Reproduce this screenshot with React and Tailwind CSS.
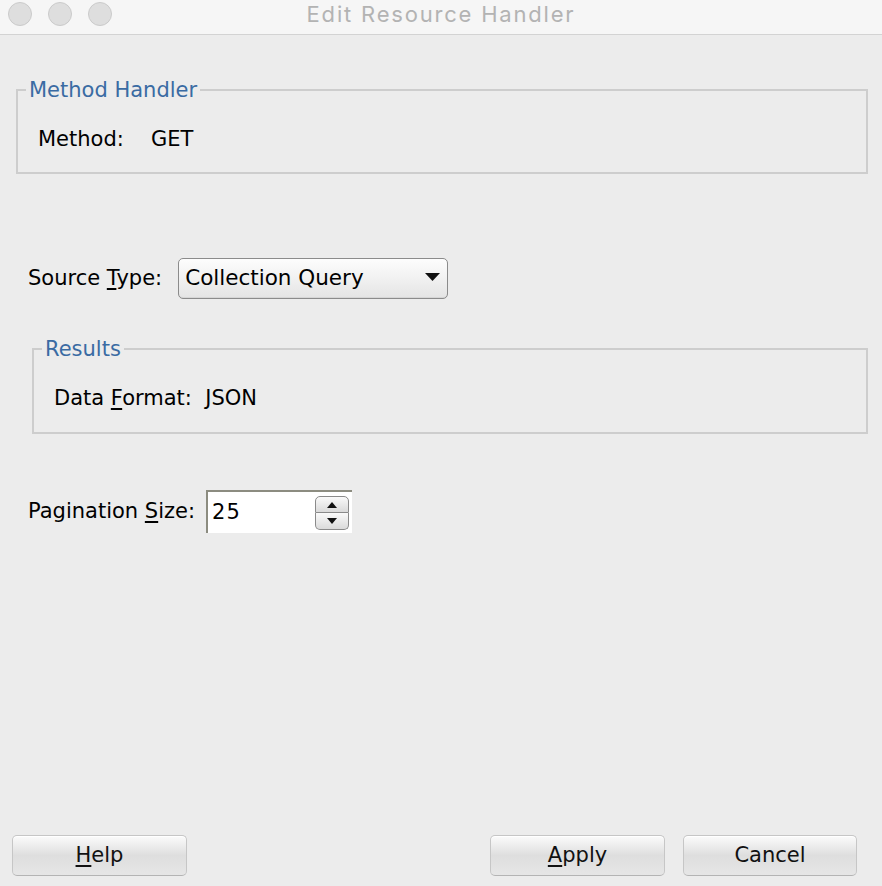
import React from "react";

const font = { fontFamily: '"DejaVu Sans", sans-serif' };

function U({ children }) {
  return <span className="underline decoration-[1.5px] underline-offset-[3px]">{children}</span>;
}

function TitleBar() {
  return (
    <div className="h-[35px] shrink-0 flex items-start bg-[#f6f6f6] border-b border-[#d3d3d3] relative">
      <div className="flex gap-4 pl-2 pt-[2px]">
        <span className="w-6 h-6 rounded-full bg-[#dedede] border border-[#cbcbcb]" />
        <span className="w-6 h-6 rounded-full bg-[#dedede] border border-[#cbcbcb]" />
        <span className="w-6 h-6 rounded-full bg-[#dedede] border border-[#cbcbcb]" />
      </div>
      <div
        className="absolute inset-x-0 top-0 h-[29px] flex items-center justify-center text-[22px] tracking-[1.8px] text-[#b3b3b3] pointer-events-none"
        style={{ fontFamily: 'Inter, "Liberation Sans", sans-serif' }}
      >
        Edit Resource Handler
      </div>
    </div>
  );
}

function Group({ title, className, children }) {
  return (
    <fieldset className={"border-2 border-[#cdcdcd] " + className}>
      <legend className="ml-[8px] px-[3px] text-[21px] leading-[24px] text-[#3a6ba3]">{title}</legend>
      {children}
    </fieldset>
  );
}

function Combo({ value }) {
  return (
    <div className="w-[270px] h-[41px] rounded-[5px] border border-[#8b8b8b] bg-gradient-to-b from-[#fdfdfd] via-[#f1f1f1] to-[#e4e4e4] flex items-center pl-[6px] pr-[7px] shadow-[inset_0_-1px_0_#d6d6d6]">
      <span className="flex-1 text-[21.5px] text-black">{value}</span>
      <svg width="15" height="8" viewBox="0 0 15 8" className="-mt-[4px]">
        <path d="M0 0h15L7.5 8z" fill="#111" />
      </svg>
    </div>
  );
}

function SpinHalf({ up }) {
  return (
    <div
      className={
        "h-[17px] w-[34px] border border-[#8a8a8a] bg-gradient-to-b from-[#fafafa] to-[#dadada] flex items-center justify-center " +
        (up ? "rounded-t-[5px]" : "rounded-b-[5px] border-t-0")
      }
    >
      <svg width="10" height="6" viewBox="0 0 10 6">
        {up ? <path d="M0 6h10L5 0z" fill="#111" /> : <path d="M0 0h10L5 6z" fill="#111" />}
      </svg>
    </div>
  );
}

function Spinner({ value }) {
  return (
    <div className="w-[146px] h-[43px] bg-white border-t-2 border-l-2 border-[#8c8c80] flex items-center pl-[4px] pr-[3px]">
      <span className="flex-1 text-[21px] tracking-[1px] text-black">{value}</span>
      <div className="flex flex-col mt-[1px]">
        <SpinHalf up />
        <SpinHalf />
      </div>
    </div>
  );
}

function Button({ children, className }) {
  return (
    <button
      type="button"
      className={
        "h-[41px] rounded-[5px] border border-[#c6c6c6] border-b-[#b4b4b4] bg-gradient-to-b from-[#fbfbfb] via-[#dedede] to-[#e6e6e6] shadow-[inset_0_1px_0_#ffffff] text-[21px] text-[#111] flex items-center justify-center " +
        className
      }
    >
      {children}
    </button>
  );
}

export default function App() {
  return (
    <div className="w-[882px] h-[886px] bg-[#ececec] flex flex-col text-black" style={font}>
      <TitleBar />
      <div className="flex-1 flex flex-col">
        <Group title="Method Handler" className="mt-[43px] ml-4 mr-[14px]">
          <div className="flex text-[21px] leading-[26px] pl-[20px] pt-[24px] pb-[20px]">
            <span className="w-[113px]">Method:</span>
            <span>GET</span>
          </div>
        </Group>

        <div className="mt-[84px] ml-[28px] flex items-center gap-[16px]">
          <span className="text-[21px]">
            Source <U>T</U>ype:
          </span>
          <Combo value="Collection Query" />
        </div>

        <Group title="Results" className="mt-[38px] ml-[32px] mr-[14px]">
          <div className="flex text-[21px] leading-[26px] whitespace-pre pl-[20px] pt-[24px] pb-[21px]">
            <span>
              Data <U>F</U>ormat:{"  "}
            </span>
            <span>JSON</span>
          </div>
        </Group>

        <div className="mt-[56px] ml-[28px] flex items-center gap-[11px]">
          <span className="text-[21px]">
            Pagination <U>S</U>ize:
          </span>
          <Spinner value="25" />
        </div>

        <div className="mt-auto mb-[10px] flex items-center pl-[12px] pr-[25px]">
          <Button className="w-[175px]">
            <U>H</U>elp
          </Button>
          <div className="flex-1" />
          <Button className="w-[175px]">
            <U>A</U>pply
          </Button>
          <Button className="w-[174px] ml-[18px]">Cancel</Button>
        </div>
      </div>
    </div>
  );
}
